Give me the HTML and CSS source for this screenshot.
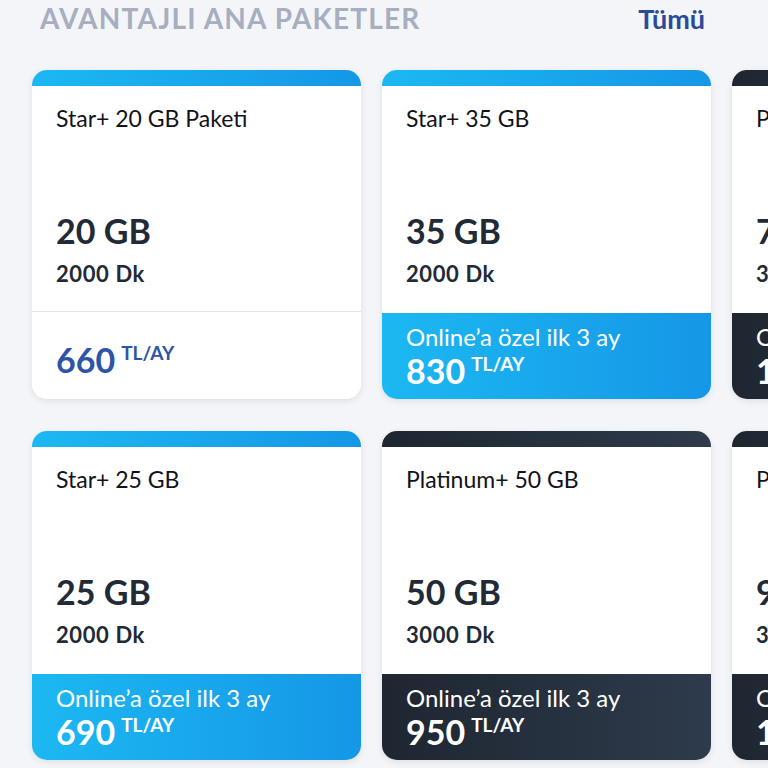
FILE: index.html
```html
<!DOCTYPE html>
<html lang="tr">
<head>
<meta charset="utf-8">
<link rel="stylesheet" href="styles.css">
</head>
<body>
<div class="page">
  <div class="header">
    <h2 class="title">AVANTAJLI ANA PAKETLER</h2>
    <a class="all">Tümü</a>
  </div>
  <div class="rows">
    <div class="row">
      <div class="card blue">
        <div class="stripe"></div>
        <div class="body plain-divider">
          <div class="name">Star+ 20 GB Paketi</div>
          <div class="data">20 GB</div>
          <div class="mins">2000 Dk</div>
        </div>
        <div class="foot plain">
          <div class="price"><span class="num">660</span><span class="unit">TL/AY</span></div>
        </div>
      </div>
      <div class="card blue">
        <div class="stripe"></div>
        <div class="body">
          <div class="name">Star+ 35 GB</div>
          <div class="data">35 GB</div>
          <div class="mins">2000 Dk</div>
        </div>
        <div class="foot">
          <div class="promo">Online’a özel ilk 3 ay</div>
          <div class="price"><span class="num">830</span><span class="unit">TL/AY</span></div>
        </div>
      </div>
      <div class="card dark">
        <div class="stripe"></div>
        <div class="body">
          <div class="name">Platinum+ 75 GB</div>
          <div class="data">75 GB</div>
          <div class="mins">3000 Dk</div>
        </div>
        <div class="foot">
          <div class="promo">Online’a özel ilk 3 ay</div>
          <div class="price"><span class="num">1100</span><span class="unit">TL/AY</span></div>
        </div>
      </div>
    </div>
    <div class="row">
      <div class="card blue">
        <div class="stripe"></div>
        <div class="body">
          <div class="name">Star+ 25 GB</div>
          <div class="data">25 GB</div>
          <div class="mins">2000 Dk</div>
        </div>
        <div class="foot">
          <div class="promo">Online’a özel ilk 3 ay</div>
          <div class="price"><span class="num">690</span><span class="unit">TL/AY</span></div>
        </div>
      </div>
      <div class="card dark">
        <div class="stripe"></div>
        <div class="body">
          <div class="name">Platinum+ 50 GB</div>
          <div class="data">50 GB</div>
          <div class="mins">3000 Dk</div>
        </div>
        <div class="foot">
          <div class="promo">Online’a özel ilk 3 ay</div>
          <div class="price"><span class="num">950</span><span class="unit">TL/AY</span></div>
        </div>
      </div>
      <div class="card dark">
        <div class="stripe"></div>
        <div class="body">
          <div class="name">Platinum+ 90 GB</div>
          <div class="data">90 GB</div>
          <div class="mins">3000 Dk</div>
        </div>
        <div class="foot">
          <div class="promo">Online’a özel ilk 3 ay</div>
          <div class="price"><span class="num">1200</span><span class="unit">TL/AY</span></div>
        </div>
      </div>
    </div>
  </div>
</div>
</body>
</html>
```
FILE: styles.css
```css
* { box-sizing: border-box; }
html, body { margin: 0; padding: 0; }
body {
  background: #f4f5f8;
  font-family: Lato, "Open Sans", sans-serif;
  width: 768px;
  height: 768px;
  overflow: hidden;
}
.header {
  display: flex;
  justify-content: space-between;
  align-items: center;
  padding: 0 63px 0 40px;
  height: 36px;
}
.title {
  margin: 0;
  font-size: 28px;
  font-weight: 700;
  letter-spacing: 1.2px;
  color: #a6aec0;
}
.all {
  font-size: 27px;
  font-weight: 700;
  color: #2b4a9a;
}
.rows {
  display: flex;
  flex-direction: column;
  gap: 32px;
  padding: 34px 0 0 32px;
}
.row {
  display: flex;
  gap: 21px;
}
.card {
  flex: 0 0 329px;
  height: 329px;
  border-radius: 15px;
  background: #fff;
  overflow: hidden;
  display: flex;
  flex-direction: column;
  box-shadow: 0 2px 6px rgba(30, 40, 60, 0.10);
}
.stripe { height: 16px; flex: 0 0 16px; }
.blue .stripe, .blue .foot {
  background: linear-gradient(90deg, #1cb8f2 0%, #1597e6 100%);
}
.dark .stripe, .dark .foot {
  background: linear-gradient(90deg, #1e2631 0%, #2e3b4c 100%);
}
.body {
  flex: 0 0 227px;
  padding: 17px 24px 0 24px;
  display: flex;
  flex-direction: column;
}
.plain-divider { border-bottom: 1px solid #e3e6ec; flex-basis: 226px; }
.name {
  font-size: 23px;
  color: #111318;
  line-height: 30px;
}
.data {
  margin-top: 78px;
  font-size: 34px;
  font-weight: 700;
  color: #222a36;
  line-height: 40px;
}
.mins {
  margin-top: 9px;
  font-size: 22px;
  font-weight: 700;
  letter-spacing: 0.6px;
  color: #222a36;
  line-height: 28px;
}
.foot {
  flex: 1;
  padding: 9px 24px 0 24px;
  color: #fff;
}
.foot.plain {
  background: #fff;
  padding-top: 29px;
}
.promo {
  font-size: 24px;
  line-height: 30px;
}
.price {
  display: flex;
  align-items: flex-start;
  line-height: 38px;
}
.num {
  font-size: 34px;
  font-weight: 700;
}
.unit {
  font-size: 19px;
  font-weight: 700;
  line-height: 24px;
  margin-left: 6px;
}
.plain .price { color: #2d54a6; }
```
